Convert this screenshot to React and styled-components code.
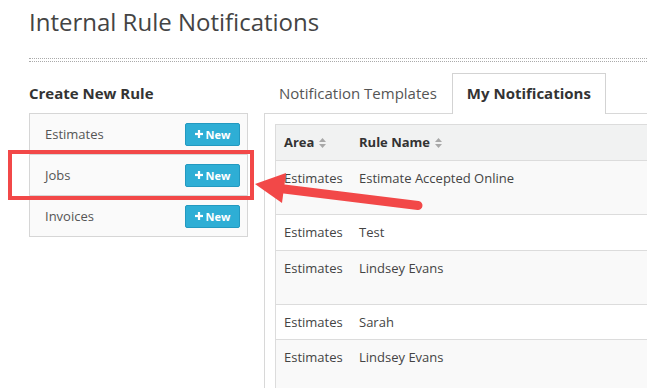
import React from 'react';
import styled, { createGlobalStyle } from 'styled-components';

const Global = createGlobalStyle`
  html, body { margin: 0; padding: 0; background: #fff; overflow: hidden; }
  body { font-family: "Open Sans", "Liberation Sans", sans-serif; color: #444; }
`;

const Page = styled.div`
  position: relative;
  width: 647px;
  height: 388px;
  overflow: hidden;
  box-sizing: border-box;
  padding: 6px 0 0 29px;
`;

const Title = styled.h1`
  margin: 0;
  font-size: 24px;
  line-height: 32px;
  font-weight: 400;
  color: #444;
`;

const Divider = styled.div`
  margin-top: 20px;
  height: 2px;
  border-top: 1px dotted #aaa;
  border-bottom: 1px dotted #aaa;
`;

const Main = styled.div`
  display: flex;
  align-items: flex-start;
  gap: 16px;
  margin-top: 11px;
`;

const Sidebar = styled.div`
  flex: none;
  width: 219px;
`;

const SideHeading = styled.h3`
  margin: 10px 0 10px;
  font-size: 15px;
  line-height: 20px;
  font-weight: 700;
  color: #333;
`;

const RuleList = styled.div`
  border: 1px solid #d6d6d6;
  background: #fafafa;
`;

const RuleRow = styled.div`
  display: flex;
  align-items: center;
  justify-content: space-between;
  height: 40px;
  padding: 0 7px 0 15px;
  font-size: 13px;
  color: #555;
  & + & { border-top: 1px solid #d6d6d6; }
`;

const NewButton = styled.button`
  display: inline-flex;
  align-items: center;
  justify-content: center;
  gap: 3px;
  width: 55px;
  height: 23px;
  padding: 0;
  border: 1px solid #2399c0;
  border-radius: 2px;
  background: #2eaed5;
  color: #fff;
  font-family: "Open Sans", "Liberation Sans", sans-serif;
  font-size: 11px;
  font-weight: 700;
  line-height: 1;
`;

const Content = styled.div`
  flex: 1;
  min-width: 0;
`;

const Tabs = styled.div`
  display: flex;
`;

const Tab = styled.div`
  position: relative;
  z-index: 1;
  padding: 9px 14px 11px;
  margin-bottom: -1px;
  font-size: 15px;
  line-height: 20px;
  white-space: nowrap;
  border: 1px solid ${(p) => (p.$active ? '#d3d3d3' : 'transparent')};
  border-bottom: none;
  background: ${(p) => (p.$active ? '#fff' : 'transparent')};
  font-weight: ${(p) => (p.$active ? 700 : 400)};
  color: ${(p) => (p.$active ? '#333' : '#555')};
`;

const Panel = styled.div`
  border-top: 1px solid #d8d8d8;
  border-left: 1px solid #d8d8d8;
  padding: 10px 0 0 10px;
`;

const Table = styled.div`
  border-top: 1px solid #dcdcdc;
  border-left: 1px solid #dcdcdc;
`;

const HeadRow = styled.div`
  display: grid;
  grid-template-columns: 75px 1fr;
  background: #f1f2f2;
  border-bottom: 1px solid #dcdcdc;
`;

const HeadCell = styled.div`
  display: flex;
  align-items: center;
  gap: 5px;
  padding: 8px;
  font-size: 13px;
  line-height: 19px;
  font-weight: 700;
  color: #333;
  white-space: nowrap;
`;

const BodyRow = styled.div`
  display: grid;
  grid-template-columns: 75px 1fr;
  background: ${(p) => (p.$striped ? '#f9f9f9' : '#fff')};
  border-bottom: 1px solid #dcdcdc;
  min-height: ${(p) => 16 + p.$lines * 18.5}px;
`;

const Cell = styled.div`
  padding: 8px;
  font-size: 13px;
  line-height: 18.5px;
  color: #444;
  white-space: nowrap;
`;

const Highlight = styled.div`
  position: absolute;
  left: 8px;
  top: 150px;
  width: 246px;
  height: 50px;
  box-sizing: border-box;
  border: 4px solid #f24848;
  pointer-events: none;
`;

const Overlay = styled.svg`
  position: absolute;
  left: 0;
  top: 0;
  pointer-events: none;
`;

const SortIcon = () => (
  <svg width="7" height="10" viewBox="0 0 7 10">
    <path d="M3.5 0 L7 4 L0 4 Z" fill="#a8a8a8" />
    <path d="M3.5 10 L7 6 L0 6 Z" fill="#a8a8a8" />
  </svg>
);

const PlusIcon = () => (
  <svg width="8" height="8" viewBox="0 0 8 8">
    <rect x="2.9" y="0" width="2.2" height="8" fill="#fff" />
    <rect x="0" y="2.9" width="8" height="2.2" fill="#fff" />
  </svg>
);

const ruleTypes = ['Estimates', 'Jobs', 'Invoices'];

const rows = [
  { area: 'Estimates', name: 'Estimate Accepted Online', lines: 2 },
  { area: 'Estimates', name: 'Test', lines: 1 },
  { area: 'Estimates', name: 'Lindsey Evans', lines: 2 },
  { area: 'Estimates', name: 'Sarah', lines: 1 },
  { area: 'Estimates', name: 'Lindsey Evans', lines: 2 },
];

export default function App() {
  return (
    <>
      <Global />
      <Page>
        <Title>Internal Rule Notifications</Title>
        <Divider />
        <Main>
          <Sidebar>
            <SideHeading>Create New Rule</SideHeading>
            <RuleList>
              {ruleTypes.map((t) => (
                <RuleRow key={t}>
                  <span>{t}</span>
                  <NewButton>
                    <PlusIcon />
                    New
                  </NewButton>
                </RuleRow>
              ))}
            </RuleList>
          </Sidebar>
          <Content>
            <Tabs>
              <Tab>Notification Templates</Tab>
              <Tab $active>My Notifications</Tab>
            </Tabs>
            <Panel>
              <Table>
                <HeadRow>
                  <HeadCell>
                    Area <SortIcon />
                  </HeadCell>
                  <HeadCell>
                    Rule Name <SortIcon />
                  </HeadCell>
                </HeadRow>
                {rows.map((r, i) => (
                  <BodyRow key={i} $striped={i % 2 === 0} $lines={r.lines}>
                    <Cell>{r.area}</Cell>
                    <Cell>{r.name}</Cell>
                  </BodyRow>
                ))}
              </Table>
            </Panel>
          </Content>
        </Main>
        <Highlight />
        <Overlay width="647" height="388" viewBox="0 0 647 388">
          <line x1="280" y1="188.5" x2="418" y2="205.5" stroke="#f24848" strokeWidth="9" strokeLinecap="round" />
          <polygon points="255,184 286,173 282,203" fill="#f24848" />
        </Overlay>
      </Page>
    </>
  );
}
